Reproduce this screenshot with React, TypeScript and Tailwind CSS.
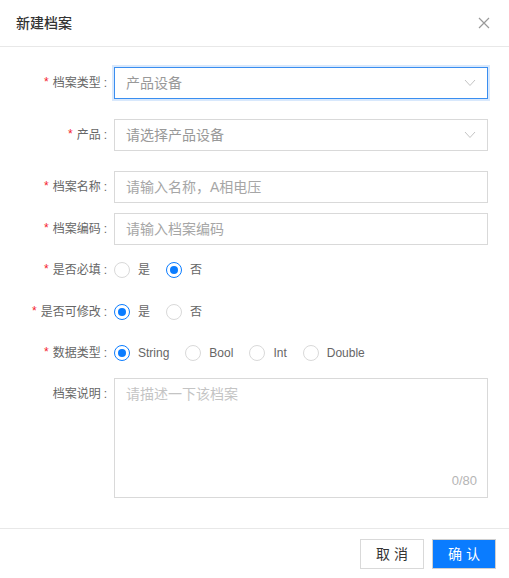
import React from "react";

const Label = ({ text, required = true }: { text: string; required?: boolean }) => (
  <div className="w-[114px] shrink-0 flex items-center justify-end pr-[7px] text-[12px] text-[#666]">
    {required && <span className="text-[#f5222d] mr-[4px] text-[12px] leading-none relative top-[-1px]">*</span>}
    <span>{text}</span>
    <span className="ml-[3px]">:</span>
  </div>
);

const Chevron = () => (
  <svg width="12" height="8" viewBox="0 0 12 8" className="shrink-0">
    <polyline points="1,1 6,6.5 11,1" fill="none" stroke="#c4c4c4" strokeWidth="1" />
  </svg>
);

const Radio = ({ checked, label }: { checked?: boolean; label: string }) => (
  <div className="flex items-center mr-[8px]">
    <span
      className={
        checked
          ? "w-[16px] h-[16px] rounded-full border border-[#0a7cff] flex items-center justify-center"
          : "w-[16px] h-[16px] rounded-full border border-[#d9d9d9]"
      }
    >
      {checked && <span className="w-[8px] h-[8px] rounded-full bg-[#0a7cff]" />}
    </span>
    <span className="px-[8px] text-[12px] text-[#666]">{label}</span>
  </div>
);

export default function App() {
  return (
    <div className="w-[509px] h-[578px] bg-white overflow-hidden font-['Liberation_Sans','Noto_Sans_CJK_SC',sans-serif]">
      <div className="h-[47px] border-b border-[#e8e8e8] flex items-center justify-between pl-[16px] pr-[19px]">
        <span className="text-[14px] font-medium text-[#333]">新建档案</span>
        <svg width="12" height="12" viewBox="0 0 12 12">
          <path d="M1 1 L11 11 M11 1 L1 11" stroke="#9a9a9a" strokeWidth="1.2" fill="none" />
        </svg>
      </div>

      <div className="pt-[20px] pr-[21px] flex flex-col">
        <div className="flex items-center h-[32px]">
          <Label text="档案类型" />
          <div className="flex-1 h-[32px] border border-[#3a8ef0] shadow-[0_0_0_2px_rgba(58,142,240,0.2)] flex items-center justify-between pl-[11px] pr-[11px] text-[14px] text-[#999]">
            <span>产品设备</span>
            <Chevron />
          </div>
        </div>

        <div className="flex items-center h-[32px] mt-[20px]">
          <Label text="产品" />
          <div className="flex-1 h-[32px] border border-[#d9d9d9] flex items-center justify-between pl-[11px] pr-[11px] text-[14px] text-[#999]">
            <span>请选择产品设备</span>
            <Chevron />
          </div>
        </div>

        <div className="flex items-center h-[32px] mt-[20px]">
          <Label text="档案名称" />
          <div className="flex-1 h-[32px] border border-[#d9d9d9] flex items-center pl-[11px] text-[14px] text-[#a6a6a6]">
            请输入名称，A相电压
          </div>
        </div>

        <div className="flex items-center h-[32px] mt-[10px]">
          <Label text="档案编码" />
          <div className="flex-1 h-[32px] border border-[#d9d9d9] flex items-center pl-[11px] text-[14px] text-[#a6a6a6]">
            请输入档案编码
          </div>
        </div>

        <div className="flex items-center h-[32px] mt-[9px]">
          <Label text="是否必填" />
          <Radio label="是" />
          <Radio label="否" checked />
        </div>

        <div className="flex items-center h-[32px] mt-[10px]">
          <Label text="是否可修改" />
          <Radio label="是" checked />
          <Radio label="否" />
        </div>

        <div className="flex items-center h-[32px] mt-[9px]">
          <Label text="数据类型" />
          <Radio label="String" checked />
          <Radio label="Bool" />
          <Radio label="Int" />
          <Radio label="Double" />
        </div>

        <div className="flex items-start mt-[9px]">
          <div className="pt-[7px]">
            <Label text="档案说明" required={false} />
          </div>
          <div className="flex-1 h-[120px] border border-[#d9d9d9] flex flex-col justify-between pl-[11px] pr-[10px] pt-[5px] pb-[7px]">
            <span className="text-[14px] text-[#c4c4c4]">请描述一下该档案</span>
            <span className="self-end text-[13px] text-[#b5b5b5]">0/80</span>
          </div>
        </div>
      </div>

      <div className="mt-[30px] border-t border-[#e8e8e8] flex justify-end gap-[8px] pt-[10px] pr-[13px]">
        <div className="w-[64px] h-[30px] border border-[#d9d9d9] flex items-center justify-center text-[14px] text-[#333] tracking-[4px] pl-[4px]">
          取消
        </div>
        <div className="w-[64px] h-[30px] border border-[#d0d0d0] bg-[#0a7cff] flex items-center justify-center text-[14px] text-white tracking-[4px] pl-[4px]">
          确认
        </div>
      </div>
    </div>
  );
}
